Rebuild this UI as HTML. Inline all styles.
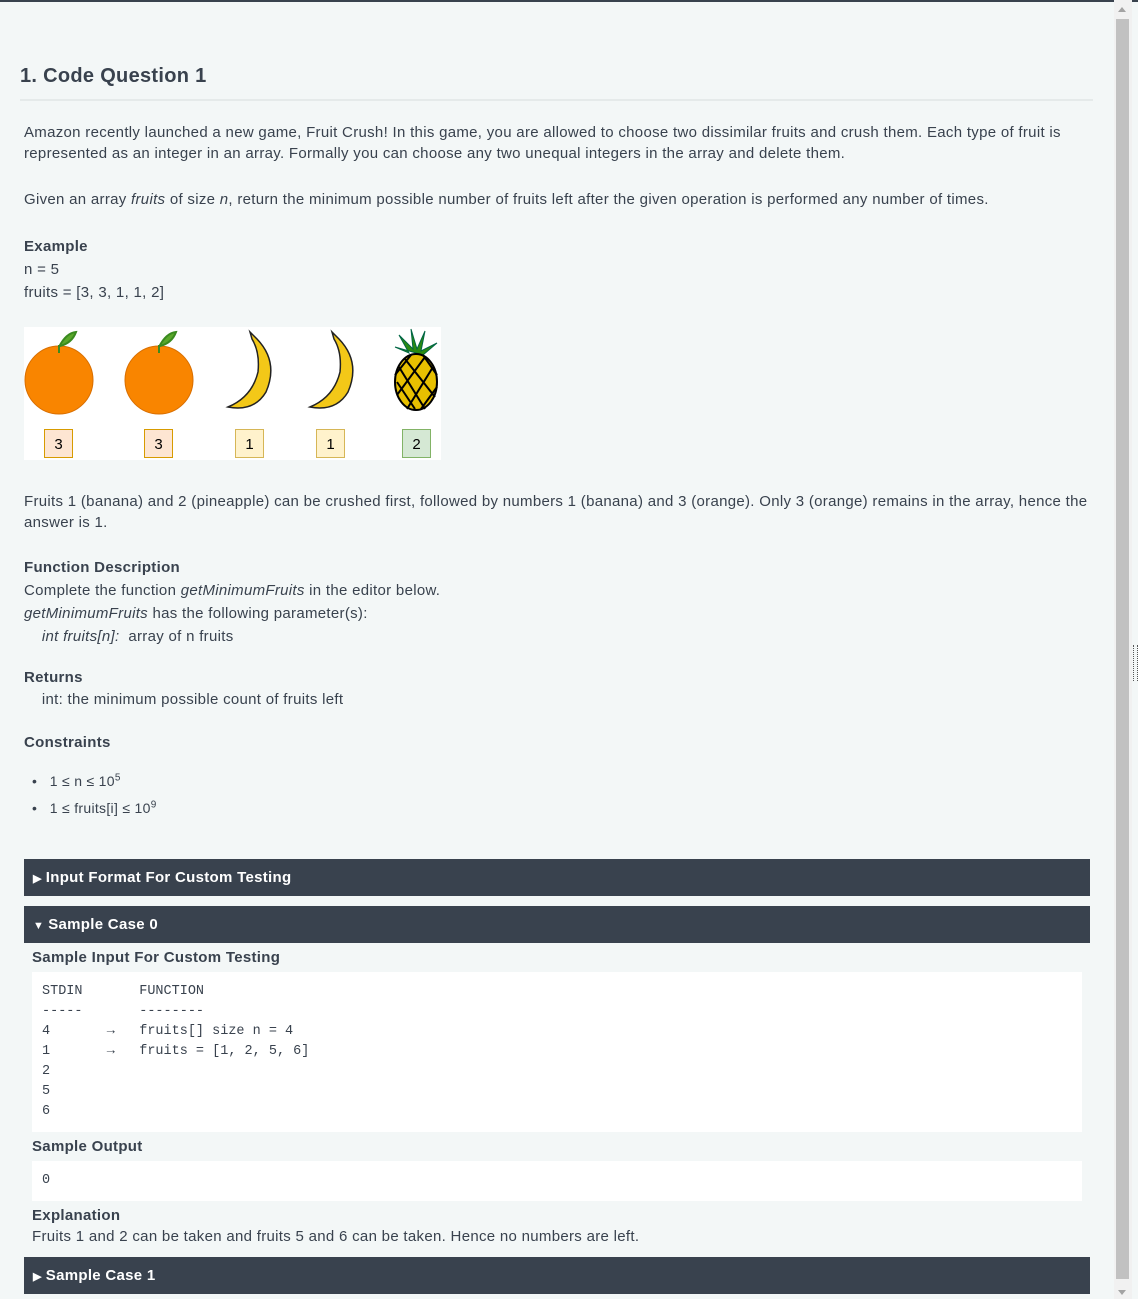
<!DOCTYPE html>
<html><head><meta charset="utf-8"><style>
body{margin:0;width:1138px;height:1299px;background:#f3f7f7;font-family:"Liberation Sans",sans-serif;color:#39424e;position:relative;overflow:hidden}
.a{position:absolute;white-space:nowrap;font-size:15px;line-height:21px;letter-spacing:0.3px}
b{font-weight:bold}
.bar{position:absolute;left:24px;width:1066px;height:37px;background:#39424e;color:#fff;font-weight:bold;font-size:15px;line-height:37px;text-indent:9px;letter-spacing:0.3px}
.bar small{font-size:11px;margin-right:4px}
.code{position:absolute;left:32px;width:1050px;background:#fff;font-family:"Liberation Mono",monospace;font-size:13.5px;line-height:20px;color:#39424e;white-space:pre}
.box{position:absolute;top:429px;width:29px;height:29px;font-size:15px;line-height:29px;text-align:center;color:#000;box-sizing:border-box}
sup{font-size:10px;line-height:0}
</style></head><body>
<div style="position:absolute;top:0;left:0;width:1138px;height:2px;background:#39424e"></div>
<div class="a" style="left:20px;top:62px;font-size:20px;line-height:28px;font-weight:bold">1. Code Question 1</div>
<div style="position:absolute;left:20px;top:99px;width:1073px;height:2px;background:#e5eaea"></div>
<div class="a" style="left:24px;top:122px">Amazon recently launched a new game, Fruit Crush! In this game, you are allowed to choose two dissimilar fruits and crush them. Each type of fruit is<br>represented as an integer in an array. Formally you can choose any two unequal integers in the array and delete them.</div>
<div class="a" style="left:24px;top:189px">Given an array <i>fruits</i> of size <i>n</i>, return the minimum possible number of fruits left after the given operation is performed any number of times.</div>
<div class="a" style="left:24px;top:235px;line-height:23px"><b>Example</b><br>n = 5<br>fruits = [3, 3, 1, 1, 2]</div>
<div style="position:absolute;left:24px;top:327px;width:417px;height:133px;background:#fff"></div>
<svg style="position:absolute;left:24px;top:327px" width="417" height="100">
<g><circle cx="35" cy="53" r="34" fill="#f98500" stroke="#d86e00" stroke-width="1"/><path d="M35 26 L35 18 M35 20 Q42 6 52 5 Q48 16 36 19" stroke="#3a8a1f" stroke-width="2" fill="#5aa82a"/></g>
<g transform="translate(100,0)"><circle cx="35" cy="53" r="34" fill="#f98500" stroke="#d86e00" stroke-width="1"/><path d="M35 26 L35 18 M35 20 Q42 6 52 5 Q48 16 36 19" stroke="#3a8a1f" stroke-width="2" fill="#5aa82a"/></g>
<g transform="translate(200,0)"><path d="M26 5 L33 12 Q55 35 42 65 Q30 85 4 80 Q28 70 34 45 Q36 25 28 12Z" fill="#f3c818" stroke="#222" stroke-width="1.5"/></g>
<g transform="translate(282,0)"><path d="M26 5 L33 12 Q55 35 42 65 Q30 85 4 80 Q28 70 34 45 Q36 25 28 12Z" fill="#f3c818" stroke="#222" stroke-width="1.5"/></g>
<g transform="translate(371,0)"><path d="M0 20 L14 26 L4 8 L18 22 L16 2 L22 22 L30 4 L26 24 L42 16 L28 28Z" fill="#2a8a10" stroke="#064" stroke-width="1"/><ellipse cx="21" cy="55" rx="21" ry="28" fill="#e8c000" stroke="#000" stroke-width="2"/><path d="M4 40 L30 82 M10 32 L40 70 M2 55 L20 82 M28 28 L42 48 M38 40 L12 82 M30 30 L2 68 M42 60 L26 82 M16 28 L0 48" stroke="#000" stroke-width="2"/></g>
</svg>
<div class="box" style="left:44px;background:#fde5d2;border:1px solid #d79b00">3</div>
<div class="box" style="left:144px;background:#fde5d2;border:1px solid #d79b00">3</div>
<div class="box" style="left:235px;background:#fff2cc;border:1px solid #d6b656">1</div>
<div class="box" style="left:316px;background:#fff2cc;border:1px solid #d6b656">1</div>
<div class="box" style="left:402px;background:#d5e8d4;border:1px solid #82b366">2</div>
<div class="a" style="left:24px;top:491px">Fruits 1 (banana) and 2 (pineapple) can be crushed first, followed by numbers 1 (banana) and 3 (orange). Only 3 (orange) remains in the array, hence the<br>answer is 1.</div>
<div class="a" style="left:24px;top:556px;line-height:23px"><b>Function Description</b><br>Complete the function <i>getMinimumFruits</i> in the editor below.<br><i>getMinimumFruits</i> has the following parameter(s):<br>&nbsp;&nbsp;&nbsp;&nbsp;<i>int fruits[n]:</i>&nbsp; array of n fruits</div>
<div class="a" style="left:24px;top:667px;line-height:22px"><b>Returns</b><br>&nbsp;&nbsp;&nbsp;&nbsp;int: the minimum possible count of fruits left</div>
<div class="a" style="left:24px;top:732px"><b>Constraints</b></div>
<div class="a" style="left:32px;top:768px;line-height:27px;font-size:14px">•&nbsp;&nbsp; 1 ≤ n ≤ 10<sup>5</sup><br>•&nbsp;&nbsp; 1 ≤ fruits[i] ≤ 10<sup>9</sup></div>
<div class="bar" style="top:859px"><small>▶</small>Input Format For Custom Testing</div>
<div class="bar" style="top:906px"><small>▼</small>Sample Case 0</div>
<div class="a" style="left:32px;top:947px"><b>Sample Input For Custom Testing</b></div>
<div class="code" style="top:972px;height:160px;padding:10px 0 0 10px;box-sizing:border-box">STDIN       FUNCTION
-----       --------
4       →   fruits[] size n = 4
1       →   fruits = [1, 2, 5, 6]
2
5
6</div>
<div class="a" style="left:32px;top:1136px"><b>Sample Output</b></div>
<div class="code" style="top:1161px;height:40px;padding:10px 0 0 10px;box-sizing:border-box">0</div>
<div class="a" style="left:32px;top:1205px"><b>Explanation</b><br>Fruits 1 and 2 can be taken and fruits 5 and 6 can be taken. Hence no numbers are left.</div>
<div class="bar" style="top:1257px"><small>▶</small>Sample Case 1</div>
<div style="position:absolute;left:1114px;top:0;width:18px;height:1299px;background:#f1f1f1"></div>
<div style="position:absolute;left:1116px;top:19px;width:13px;height:1260px;background:#c1c1c1"></div>
<div style="position:absolute;left:1118px;top:7px;width:0;height:0;border-left:4px solid transparent;border-right:4px solid transparent;border-bottom:5px solid #a3a3a3"></div>
<div style="position:absolute;left:1118px;top:1290px;width:0;height:0;border-left:4px solid transparent;border-right:4px solid transparent;border-top:5px solid #a3a3a3"></div>
<div style="position:absolute;left:1133px;top:645px;width:3px;height:36px;border-left:1px dotted #555;border-right:1px dotted #555"></div>
</body></html>
